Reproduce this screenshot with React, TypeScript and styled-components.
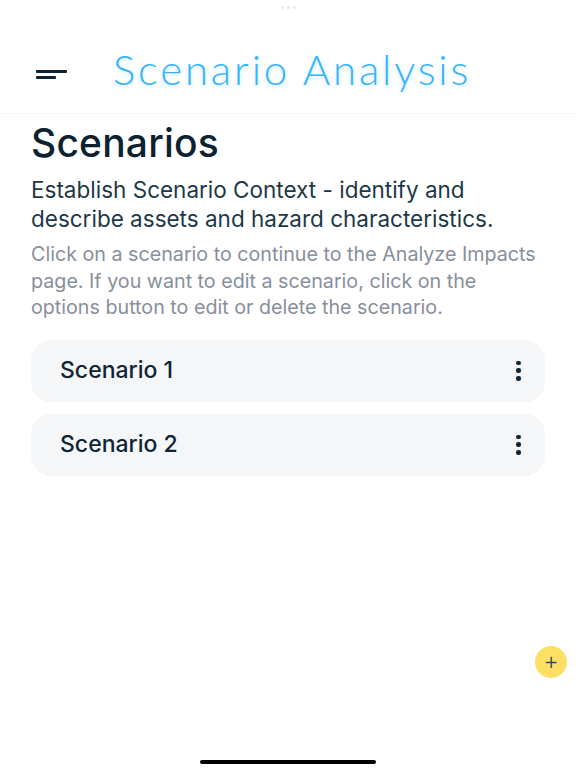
import React from "react";
import styled, { createGlobalStyle } from "styled-components";

const Global = createGlobalStyle`
  html, body { margin: 0; padding: 0; background: #ffffff; }
  body { font-family: "Inter", "Noto Sans", sans-serif; }
  * { box-sizing: border-box; }
`;

const Page = styled.div`
  position: relative;
  width: 576px;
  height: 768px;
  overflow: hidden;
  background: #ffffff;
  display: flex;
  flex-direction: column;
`;

const TopBar = styled.header`
  height: 114px;
  border-bottom: 1px solid #f3f4f6;
  display: flex;
  flex-direction: column;
`;

const Grabber = styled.div`
  height: 14px;
  display: flex;
  justify-content: center;
  align-items: center;
  gap: 3px;
`;

const GrabDot = styled.span`
  width: 3px;
  height: 3px;
  border-radius: 50%;
  background: #e9e9ec;
`;

const HeaderRow = styled.div`
  flex: 1;
  display: flex;
  align-items: center;
  padding: 10px 0 0 36px;
  gap: 46px;
`;

const MenuButton = styled.button`
  border: none;
  background: none;
  padding: 0;
  width: 31px;
  height: 9px;
  display: flex;
  flex-direction: column;
  justify-content: space-between;
  margin-top: 11px;
`;

const MenuLine = styled.span<{ $w: number }>`
  display: block;
  width: ${(p) => p.$w}px;
  height: 3px;
  background: #0f2230;
  border-radius: 1px;
`;

const Title = styled.h1`
  margin: 0;
  font-family: "Lato", sans-serif;
  font-weight: 300;
  font-size: 42px;
  letter-spacing: 2.8px;
  color: #34b4fb;
  text-shadow: 0 2px 4px rgba(52, 180, 251, 0.25);
`;

const Content = styled.main`
  padding: 1px 31px 0 31px;
  display: flex;
  flex-direction: column;
`;

const Heading = styled.h2`
  margin: 0;
  font-family: "Inter", sans-serif;
  font-weight: 500;
  font-size: 39px;
  line-height: 56px;
  color: #0c2231;
  letter-spacing: 0.2px;
`;

const Lead = styled.p`
  margin: 4px 0 0;
  font-family: "Inter", sans-serif;
  font-size: 22.5px;
  line-height: 29px;
  color: #1d3949;
`;

const Hint = styled.p`
  margin: 8px 0 0;
  font-family: "Inter", sans-serif;
  font-size: 19.7px;
  line-height: 26.5px;
  color: #878f9c;
`;

const List = styled.ul`
  list-style: none;
  margin: 19px 0 0;
  padding: 0;
  display: flex;
  flex-direction: column;
  gap: 12px;
`;

const Card = styled.li`
  height: 62px;
  border-radius: 20px;
  background: #f5f6f8;
  display: flex;
  align-items: center;
  justify-content: space-between;
  padding: 0 24px 0 29px;
`;

const CardTitle = styled.span`
  font-family: "Inter", sans-serif;
  font-weight: 500;
  font-size: 23px;
  color: #0f2533;
  margin-top: -2px;
`;

const Kebab = styled.button`
  border: none;
  background: none;
  padding: 0;
  width: 5px;
  height: 20px;
  display: flex;
  flex-direction: column;
  align-items: center;
  justify-content: space-between;
`;

const KebabDot = styled.span`
  width: 4.5px;
  height: 4.5px;
  flex-shrink: 0;
  border-radius: 50%;
  background: #0f2533;
`;

const Fab = styled.button`
  position: absolute;
  left: 535px;
  top: 646px;
  width: 32px;
  height: 32px;
  border-radius: 50%;
  border: none;
  background: #fde063;
  color: #34495a;
  font-family: "DejaVu Sans", sans-serif;
  font-size: 17px;
  line-height: 32px;
  padding: 0;
  text-align: center;
`;

const HomeIndicator = styled.div`
  position: absolute;
  left: 200px;
  bottom: 4px;
  width: 176px;
  height: 4px;
  border-radius: 2px;
  background: #000000;
`;

const scenarios = ["Scenario 1", "Scenario 2"];

export default function App() {
  return (
    <Page>
      <Global />
      <TopBar>
        <Grabber>
          <GrabDot />
          <GrabDot />
          <GrabDot />
        </Grabber>
        <HeaderRow>
          <MenuButton aria-label="menu">
            <MenuLine $w={31} />
            <MenuLine $w={20} />
          </MenuButton>
          <Title>Scenario Analysis</Title>
        </HeaderRow>
      </TopBar>
      <Content>
        <Heading>Scenarios</Heading>
        <Lead>
          Establish Scenario Context - identify and describe assets and hazard
          characteristics.
        </Lead>
        <Hint>
          Click on a scenario to continue to the Analyze Impacts page. If you
          want to edit a scenario, click on the options button to edit or
          delete the scenario.
        </Hint>
        <List>
          {scenarios.map((s) => (
            <Card key={s}>
              <CardTitle>{s}</CardTitle>
              <Kebab aria-label="options">
                <KebabDot />
                <KebabDot />
                <KebabDot />
              </Kebab>
            </Card>
          ))}
        </List>
      </Content>
      <Fab aria-label="add">+</Fab>
      <HomeIndicator />
    </Page>
  );
}
